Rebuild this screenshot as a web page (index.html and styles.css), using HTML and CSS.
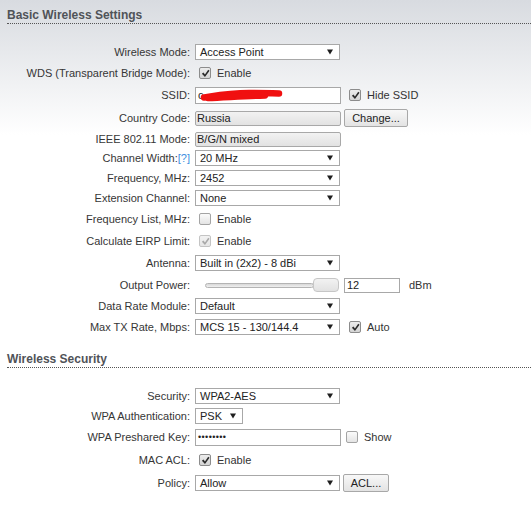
FILE: index.html
```html
<!DOCTYPE html>
<html>
<head>
<meta charset="utf-8">
<link rel="stylesheet" href="styles.css">
</head>
<body>
<div class="page">
  <section class="sec">
    <h2 class="sec-title">Basic Wireless Settings</h2>
    <div class="rows">
      <div class="row">
        <span class="lbl">Wireless Mode:</span>
        <div class="sel w145"><span>Access Point</span><svg class="arr" viewBox="0 0 7 6"><polygon points="0,0 7,0 3.5,6"/></svg></div>
      </div>
      <div class="row t22">
        <span class="lbl">WDS (Transparent Bridge Mode):</span>
        <span class="cb"><svg viewBox="0 0 10 10"><polygon points="1,5.2 2.7,3.9 4.4,6 8,0.8 9.5,2 4.4,9"/></svg></span><span>Enable</span>
      </div>
      <div class="row t22">
        <span class="lbl">SSID:</span>
        <div class="inp w146"><span>c</span><svg class="scribble" viewBox="0 0 90 14"><path d="M5 9.5 C 15 8, 30 5, 50 5 S 74 5.5, 80 5.5"/><path d="M9 10 C 25 9.5, 45 8, 66 7.5"/></svg></div>
        <span class="cb m8"><svg viewBox="0 0 10 10"><polygon points="1,5.2 2.7,3.9 4.4,6 8,0.8 9.5,2 4.4,9"/></svg></span><span>Hide SSID</span>
      </div>
      <div class="row t24">
        <span class="lbl">Country Code:</span>
        <div class="inp ro w146"><span>Russia</span></div>
        <div class="btn w64">Change...</div>
      </div>
      <div class="row t18">
        <span class="lbl">IEEE 802.11 Mode:</span>
        <div class="inp ro w146"><span>B/G/N mixed</span></div>
      </div>
      <div class="row">
        <span class="lbl">Channel Width:<span class="help">[?]</span></span>
        <div class="sel w145"><span>20 MHz</span><svg class="arr" viewBox="0 0 7 6"><polygon points="0,0 7,0 3.5,6"/></svg></div>
      </div>
      <div class="row">
        <span class="lbl">Frequency, MHz:</span>
        <div class="sel w145"><span>2452</span><svg class="arr" viewBox="0 0 7 6"><polygon points="0,0 7,0 3.5,6"/></svg></div>
      </div>
      <div class="row">
        <span class="lbl">Extension Channel:</span>
        <div class="sel w145"><span>None</span><svg class="arr" viewBox="0 0 7 6"><polygon points="0,0 7,0 3.5,6"/></svg></div>
      </div>
      <div class="row t22">
        <span class="lbl">Frequency List, MHz:</span>
        <span class="cb off"></span><span>Enable</span>
      </div>
      <div class="row t22">
        <span class="lbl">Calculate EIRP Limit:</span>
        <span class="cb dis"><svg viewBox="0 0 10 10"><polygon points="1,5.2 2.7,3.9 4.4,6 8,0.8 9.5,2 4.4,9"/></svg></span><span>Enable</span>
      </div>
      <div class="row t22">
        <span class="lbl">Antenna:</span>
        <div class="sel w145"><span>Built in (2x2) - 8 dBi</span><svg class="arr" viewBox="0 0 7 6"><polygon points="0,0 7,0 3.5,6"/></svg></div>
      </div>
      <div class="row t22">
        <span class="lbl">Output Power:</span>
        <div class="slider"><span class="track"></span><span class="thumb"></span></div>
        <div class="inp num"><span>12</span></div>
        <span class="unit">dBm</span>
      </div>
      <div class="row">
        <span class="lbl">Data Rate Module:</span>
        <div class="sel w145"><span>Default</span><svg class="arr" viewBox="0 0 7 6"><polygon points="0,0 7,0 3.5,6"/></svg></div>
      </div>
      <div class="row t22">
        <span class="lbl">Max TX Rate, Mbps:</span>
        <div class="sel w145"><span>MCS 15 - 130/144.4</span><svg class="arr" viewBox="0 0 7 6"><polygon points="0,0 7,0 3.5,6"/></svg></div>
        <span class="cb m9"><svg viewBox="0 0 10 10"><polygon points="1,5.2 2.7,3.9 4.4,6 8,0.8 9.5,2 4.4,9"/></svg></span><span>Auto</span>
      </div>
    </div>
  </section>

  <section class="sec sec2">
    <h2 class="sec-title">Wireless Security</h2>
    <div class="rows">
      <div class="row">
        <span class="lbl">Security:</span>
        <div class="sel w145"><span>WPA2-AES</span><svg class="arr" viewBox="0 0 7 6"><polygon points="0,0 7,0 3.5,6"/></svg></div>
      </div>
      <div class="row">
        <span class="lbl">WPA Authentication:</span>
        <div class="sel w48"><span>PSK</span><svg class="arr" viewBox="0 0 7 6"><polygon points="0,0 7,0 3.5,6"/></svg></div>
      </div>
      <div class="row t22">
        <span class="lbl">WPA Preshared Key:</span>
        <div class="inp w146"><span class="dots">••••••••</span></div>
        <span class="cb off m5"></span><span>Show</span>
      </div>
      <div class="row t24">
        <span class="lbl">MAC ACL:</span>
        <span class="cb"><svg viewBox="0 0 10 10"><polygon points="1,5.2 2.7,3.9 4.4,6 8,0.8 9.5,2 4.4,9"/></svg></span><span>Enable</span>
      </div>
      <div class="row t22">
        <span class="lbl">Policy:</span>
        <div class="sel w145"><span>Allow</span><svg class="arr" viewBox="0 0 7 6"><polygon points="0,0 7,0 3.5,6"/></svg></div>
        <div class="btn w46">ACL...</div>
      </div>
    </div>
  </section>
</div>
</body>
</html>
```

FILE: styles.css
```css
html, body {
  margin: 0;
  padding: 0;
}

body {
  font-family: "Liberation Sans", Arial, sans-serif;
  font-size: 11px;
  color: #333;
  background: #fff linear-gradient(#d8dbe0, #fff 135px) no-repeat;
  min-height: 520px;
}

.sec-title {
  margin: 0 0 0 7px;
  padding-top: 7px;
  height: 16px;
  line-height: 16px;
  font-size: 12px;
  font-weight: bold;
  color: #505358;
  border-bottom: 1px dotted #555;
}

.sec2 {
  margin-top: 6px;
}

.rows {
  margin-top: 18px;
}

.row {
  display: flex;
  align-items: center;
  height: 20px;
  white-space: nowrap;
}

.row.t18 { height: 18px; }
.row.t22 { height: 22px; }
.row.t24 { height: 24px; }

.lbl {
  flex: none;
  width: 190px;
  margin-right: 5px;
  text-align: right;
  color: #363636;
}

.help {
  color: #3d8fe0;
}

.sel {
  box-sizing: border-box;
  height: 16px;
  border: 1px solid #a8a8a8;
  background: #fff;
  display: flex;
  align-items: center;
  justify-content: space-between;
  padding: 0 6px 0 4px;
  color: #222;
}

.w145 { width: 145px; }
.w146 { width: 146px; }
.w48 { width: 48px; }
.w64 { width: 64px; }
.w46 { width: 46px; }

.arr {
  width: 6px;
  height: 6px;
  fill: #1e1e1e;
}

.inp {
  position: relative;
  box-sizing: border-box;
  height: 17px;
  border: 1px solid #a8a8a8;
  background: #fff;
  padding-left: 2px;
  display: flex;
  align-items: center;
  color: #222;
}

.inp.ro {
  height: 15px;
  border-radius: 2px;
  padding-left: 1px;
  background: linear-gradient(#f2f2f2, #e2e2e2);
}

.inp.num {
  width: 56px;
  height: 15px;
  margin-left: 5px;
}

.dots {
  font-size: 9px;
  letter-spacing: 0.4px;
  color: #222;
}

.scribble {
  position: absolute;
  left: 3px;
  top: 0;
  width: 90px;
  height: 14px;
  fill: none;
  stroke: #f01010;
  stroke-width: 6.5;
  stroke-linecap: round;
}

.btn {
  box-sizing: border-box;
  height: 18px;
  margin-left: 3px;
  border: 1px solid #a8a8a8;
  border-radius: 2px;
  background: linear-gradient(#f8f8f8, #e3e3e3);
  display: flex;
  align-items: center;
  justify-content: center;
  color: #222;
}

.cb {
  flex: none;
  box-sizing: border-box;
  width: 12px;
  height: 12px;
  margin: 0 6px 0 4px;
  border: 1px solid #8c8c8c;
  border-radius: 2px;
  background: linear-gradient(#ececec, #d4d4d4);
  display: flex;
  align-items: center;
  justify-content: center;
}

.cb svg {
  width: 9px;
  height: 9px;
  fill: #2a2a2a;
}

.cb.off {
  border-color: #a4a4a4;
  background: linear-gradient(#fbfbfb, #e4e4e4);
}

.cb.dis {
  border-color: #c4c4c4;
  background: linear-gradient(#f2f2f2, #e6e6e6);
}

.cb.dis svg {
  fill: #a9a9a9;
}

.cb.m8 { margin-left: 8px; }
.cb.m9 { margin-left: 9px; }
.cb.m5 { margin-left: 5px; }

.slider {
  width: 144px;
  height: 16px;
  display: flex;
  align-items: center;
}

.track {
  flex: 1;
  box-sizing: border-box;
  height: 5px;
  margin-left: 10px;
  border: 1px solid #b4b4b4;
  border-radius: 3px;
  background: linear-gradient(#d8d8d8, #efefef);
}

.thumb {
  flex: none;
  box-sizing: border-box;
  width: 26px;
  height: 14px;
  margin-left: -1px;
  border: 1px solid #c6c6c6;
  border-radius: 4px;
  background: linear-gradient(#f2f2f2, #e2e2e2);
}

.unit {
  margin-left: 9px;
}
```
